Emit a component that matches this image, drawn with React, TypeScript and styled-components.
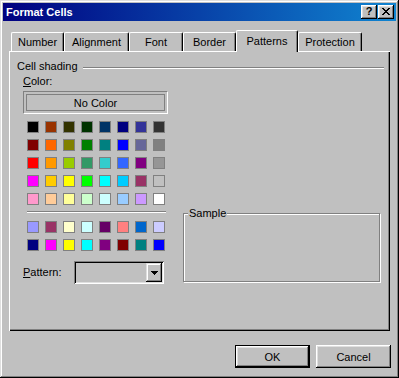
import React from "react";
import styled, { createGlobalStyle } from "styled-components";

const GlobalStyle = createGlobalStyle`
  html, body {
    margin: 0;
    padding: 0;
    background: #c0c0c0;
  }
  body {
    font-family: "Liberation Sans", Arial, sans-serif;
    font-size: 11px;
    color: #000;
  }
`;

const Window = styled.div`
  width: 399px;
  height: 378px;
  box-sizing: border-box;
  padding: 3px;
  background: #c0c0c0;
  box-shadow: inset -1px -1px #000, inset 1px 1px #dfdfdf,
    inset -2px -2px #808080, inset 2px 2px #fff;
  display: flex;
  flex-direction: column;
`;

const TitleBar = styled.div`
  height: 18px;
  display: flex;
  align-items: center;
  padding: 0 2px 0 3px;
  background: linear-gradient(to right, #000080, #1084d0);
`;

const TitleText = styled.div`
  flex: 1;
  color: #fff;
  font-weight: bold;
  font-size: 11px;
  line-height: 13px;
`;

const CaptionButton = styled.div<{ $gap?: number }>`
  width: 16px;
  height: 14px;
  box-sizing: border-box;
  margin-left: ${(p) => p.$gap ?? 0}px;
  background: #c0c0c0;
  box-shadow: inset -1px -1px #000, inset 1px 1px #fff,
    inset -2px -2px #808080, inset 2px 2px #dfdfdf;
  display: flex;
  align-items: center;
  justify-content: center;
  font-weight: bold;
  font-size: 11px;
  line-height: 11px;
  padding-bottom: 1px;
`;

const Body = styled.div`
  flex: 1;
  display: flex;
  flex-direction: column;
  padding: 9px 6px 0 6px;
`;

const TabRow = styled.div`
  height: 21px;
  display: flex;
  align-items: flex-end;
  padding-left: 2px;
`;

const Tab = styled.div<{ $w: number; $active?: boolean }>`
  position: relative;
  z-index: ${(p) => (p.$active ? 1 : 0)};
  width: ${(p) => p.$w}px;
  height: ${(p) => (p.$active ? 22 : 19)}px;
  margin-bottom: ${(p) => (p.$active ? -1 : 0)}px;
  box-sizing: border-box;
  background: #c0c0c0;
  border-left: 1px solid #fff;
  border-top: 1px solid #fff;
  border-right: 1px solid #000;
  border-top-left-radius: 2px;
  border-top-right-radius: 2px;
  box-shadow: inset -1px 0 #808080;
  display: flex;
  align-items: center;
  justify-content: center;
  padding-bottom: ${(p) => (p.$active ? 2 : 0)}px;
`;

const Panel = styled.div`
  height: 280px;
  box-sizing: border-box;
  padding: 9px 6px 0 8px;
  box-shadow: inset 1px 1px #fff, inset -1px -1px #000, inset -2px -2px #808080;
  display: flex;
  flex-direction: column;
`;

const GroupHeader = styled.div`
  display: flex;
  height: 13px;
  line-height: 13px;
  gap: 5px;
`;

const EtchedLine = styled.div`
  flex: 1;
  height: 0;
  margin-top: 7px;
  border-top: 1px solid #808080;
  border-bottom: 1px solid #fff;
`;

const Content = styled.div`
  display: flex;
  padding-left: 6px;
  gap: 15px;
`;

const LeftCol = styled.div`
  width: 145px;
  display: flex;
  flex-direction: column;
  padding-top: 2px;
`;

const Label = styled.div`
  line-height: 13px;
`;

const NoColor = styled.div`
  margin-top: 3px;
  height: 23px;
  box-sizing: border-box;
  border-top: 1px solid #808080;
  border-left: 1px solid #808080;
  border-bottom: 1px solid #fff;
  border-right: 1px solid #fff;
  padding: 2px;
  display: flex;
`;

const NoColorInner = styled.div`
  flex: 1;
  border: 1px solid #808080;
  display: flex;
  align-items: center;
  justify-content: center;
`;

const Grid = styled.div<{ $top: number }>`
  margin-top: ${(p) => p.$top}px;
  padding-left: 4px;
  display: grid;
  grid-template-columns: repeat(8, 12px);
  grid-auto-rows: 12px;
  gap: 6px;
`;

const Swatch = styled.div<{ $color: string }>`
  box-sizing: border-box;
  border: 1px solid #808080;
  background: ${(p) => p.$color};
`;

const Separator = styled.div`
  margin: 6px 2px 0 4px;
  height: 0;
  border-top: 1px solid #808080;
  border-bottom: 1px solid #fff;
`;

const PatternRow = styled.div`
  margin-top: 10px;
  display: flex;
  align-items: center;
`;

const PatternLabel = styled.div`
  width: 51px;
  line-height: 13px;
`;

const Combo = styled.div`
  width: 90px;
  height: 23px;
  box-sizing: border-box;
  padding: 2px;
  box-shadow: inset 1px 1px #808080, inset -1px -1px #fff,
    inset 2px 2px #000, inset -2px -2px #dfdfdf;
  display: flex;
  justify-content: flex-end;
`;

const DropButton = styled.div`
  width: 16px;
  height: 19px;
  box-sizing: border-box;
  background: #c0c0c0;
  box-shadow: inset -1px -1px #000, inset 1px 1px #dfdfdf,
    inset -2px -2px #808080, inset 2px 2px #fff;
  display: flex;
  align-items: center;
  justify-content: center;
`;

const SampleBox = styled.div`
  position: relative;
  margin-top: 140px;
  width: 197px;
  height: 69px;
  box-sizing: border-box;
  border: 1px solid #808080;
  box-shadow: inset 1px 1px #fff, 1px 1px #fff;
`;

const SampleLegend = styled.span`
  position: absolute;
  top: -7px;
  left: 4px;
  padding: 0 1px;
  background: #c0c0c0;
  line-height: 13px;
`;

const Footer = styled.div`
  margin-top: 14px;
  margin-right: -1px;
  display: flex;
  justify-content: flex-end;
  gap: 6px;
`;

const Button = styled.div<{ $default?: boolean }>`
  width: 75px;
  height: 23px;
  box-sizing: border-box;
  display: flex;
  align-items: center;
  justify-content: center;
  background: #c0c0c0;
  border: ${(p) => (p.$default ? "1px solid #000" : "none")};
  box-shadow: inset -1px -1px #000, inset 1px 1px #fff,
    inset -2px -2px #808080, inset 2px 2px #dfdfdf;
`;

const standard = [
  ["#000000", "#993300", "#333300", "#003300", "#003366", "#000080", "#333399", "#333333"],
  ["#800000", "#ff6600", "#808000", "#008000", "#008080", "#0000ff", "#666699", "#808080"],
  ["#ff0000", "#ff9900", "#99cc00", "#339966", "#33cccc", "#3366ff", "#800080", "#969696"],
  ["#ff00ff", "#ffcc00", "#ffff00", "#00ff00", "#00ffff", "#00ccff", "#993366", "#c0c0c0"],
  ["#ff99cc", "#ffcc99", "#ffff99", "#ccffcc", "#ccffff", "#99ccff", "#cc99ff", "#ffffff"],
];

const chart = [
  ["#9999ff", "#993366", "#ffffcc", "#ccffff", "#660066", "#ff8080", "#0066cc", "#ccccff"],
  ["#000080", "#ff00ff", "#ffff00", "#00ffff", "#800080", "#800000", "#008080", "#0000ff"],
];

const tabs = [
  { name: "Number", w: 53 },
  { name: "Alignment", w: 65 },
  { name: "Font", w: 54 },
  { name: "Border", w: 53 },
  { name: "Patterns", w: 62, active: true },
  { name: "Protection", w: 64 },
];

const CloseGlyph = () => (
  <svg width="8" height="7" viewBox="0 0 8 7" shapeRendering="crispEdges">
    {Array.from({ length: 7 }).map((_, i) => (
      <React.Fragment key={i}>
        <rect x={i} y={i} width="2" height="1" fill="#000" />
        <rect x={6 - i} y={i} width="2" height="1" fill="#000" />
      </React.Fragment>
    ))}
  </svg>
);

const Arrow = () => (
  <svg width="7" height="4" viewBox="0 0 7 4" shapeRendering="crispEdges">
    <polygon points="0,0 7,0 3.5,4" fill="#000" />
  </svg>
);

export default function App() {
  return (
    <>
      <GlobalStyle />
      <Window>
        <TitleBar>
          <TitleText>Format Cells</TitleText>
          <CaptionButton>?</CaptionButton>
          <CaptionButton $gap={1}>
            <CloseGlyph />
          </CaptionButton>
        </TitleBar>
        <Body>
          <TabRow>
            {tabs.map((t) => (
              <Tab key={t.name} $w={t.w} $active={t.active}>
                {t.name}
              </Tab>
            ))}
          </TabRow>
          <Panel>
            <GroupHeader>
              <span>Cell shading</span>
              <EtchedLine />
            </GroupHeader>
            <Content>
              <LeftCol>
                <Label>
                  <u>C</u>olor:
                </Label>
                <NoColor>
                  <NoColorInner>No Color</NoColorInner>
                </NoColor>
                <Grid $top={7}>
                  {standard.flat().map((c, i) => (
                    <Swatch key={i} $color={c} />
                  ))}
                </Grid>
                <Separator />
                <Grid $top={8}>
                  {chart.flat().map((c, i) => (
                    <Swatch key={i} $color={c} />
                  ))}
                </Grid>
                <PatternRow>
                  <PatternLabel>
                    <u>P</u>attern:
                  </PatternLabel>
                  <Combo>
                    <DropButton>
                      <Arrow />
                    </DropButton>
                  </Combo>
                </PatternRow>
              </LeftCol>
              <SampleBox>
                <SampleLegend>Sample</SampleLegend>
              </SampleBox>
            </Content>
          </Panel>
          <Footer>
            <Button $default>OK</Button>
            <Button>Cancel</Button>
          </Footer>
        </Body>
      </Window>
    </>
  );
}
